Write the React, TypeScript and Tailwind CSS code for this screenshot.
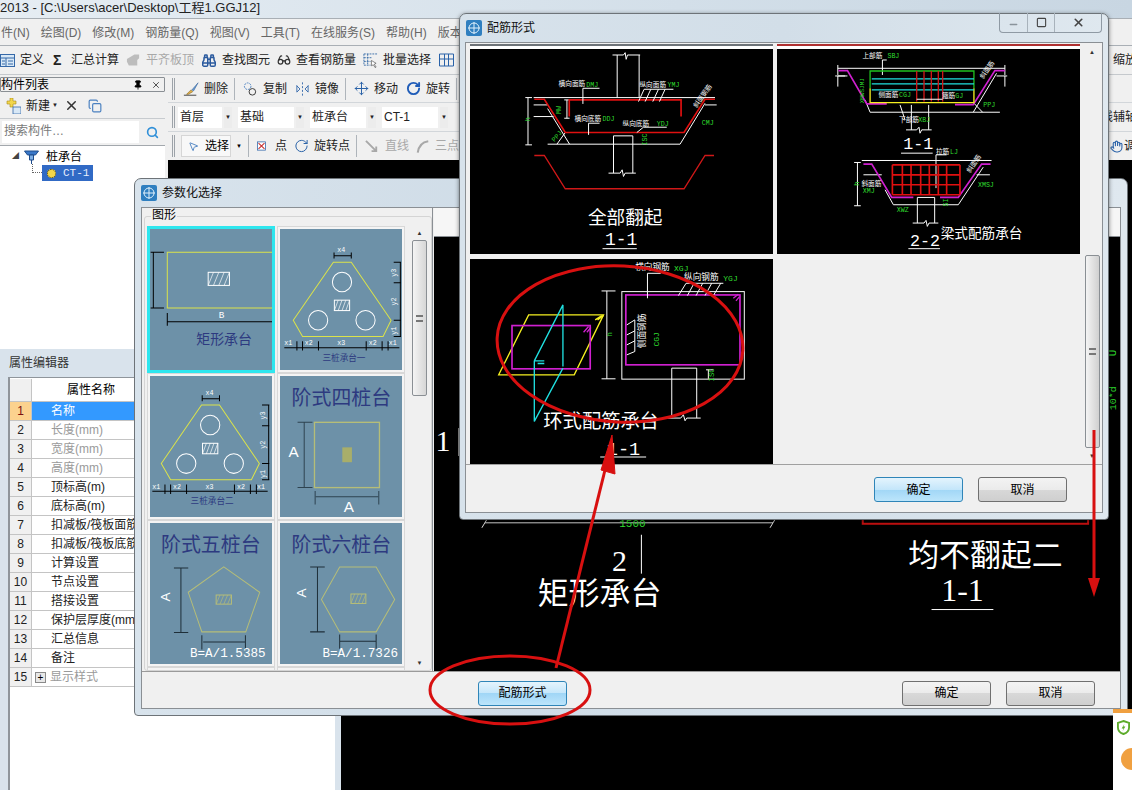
import type { ReactNode } from "react";
import { Binoculars, Copy, FlipHorizontal2, Glasses, Hand, Minus, MousePointer2, Move, Pin, RotateCw, Search, Square, X } from "lucide-react";

const menus = ["件(N)", "绘图(D)", "修改(M)", "钢筋量(Q)", "视图(V)", "工具(T)", "在线服务(S)", "帮助(H)", "版本号"];

const props = [
  { name: "名称", dim: false },
  { name: "长度(mm)", dim: true },
  { name: "宽度(mm)", dim: true },
  { name: "高度(mm)", dim: true },
  { name: "顶标高(m)", dim: false },
  { name: "底标高(m)", dim: false },
  { name: "扣减板/筏板面筋", dim: false },
  { name: "扣减板/筏板底筋", dim: false },
  { name: "计算设置", dim: false },
  { name: "节点设置", dim: false },
  { name: "搭接设置", dim: false },
  { name: "保护层厚度(mm)", dim: false },
  { name: "汇总信息", dim: false },
  { name: "备注", dim: false },
  { name: "显示样式", dim: true },
];

// all drawings below use 3x coordinates, read straight off the zoomed reference
function L({ d, c = "#fff", w = 3 }: { d: string; c?: string; w?: number }) {
  return <path d={d} stroke={c} strokeWidth={w} fill="none" />;
}

function T({ x, y, s, c = "#fff", size = 20, a = "start", r, mono }: { x: number; y: number; s: string; c?: string; size?: number; a?: "start" | "middle" | "end"; r?: number; mono?: boolean }) {
  return (
    <text
      x={x}
      y={y}
      fill={c}
      fontSize={size}
      textAnchor={a}
      transform={r ? `rotate(${r} ${x} ${y})` : undefined}
      fontFamily={mono ? "'Liberation Mono', monospace" : undefined}
    >
      {s}
    </text>
  );
}

function Hatch({ x, y, w, h, c = "#fff" }: { x: number; y: number; w: number; h: number; c?: string }) {
  const step = w / 4;
  return (
    <g>
      <rect x={x} y={y} width={w} height={h} stroke={c} strokeWidth={3} fill="none" />
      {[0, 1, 2, 3].map((i) => (
        <L key={i} d={`M${x + i * step} ${y + h}L${x + (i + 1) * step} ${y}`} c={c} w={2} />
      ))}
    </g>
  );
}

function WinIcon() {
  return (
    <svg viewBox="0 0 16 16" className="w-4 h-4 shrink-0">
      <rect width="16" height="16" rx="2" fill="#2f7fc0" />
      <circle cx="8" cy="8" r="5" stroke="#dff0fb" fill="none" />
      <path d="M8 2v12M2 8h12" stroke="#dff0fb" />
    </svg>
  );
}

function AllRaised() {
  return (
    <svg viewBox="30 117 908 616" className="block w-full h-full">
      <L d="M471 263V135M537 263V135M457 135H490L495 128L498 148L502 135H540" />
      <L d="M220 263H765M203 263V405M195 263H215M195 405H215M220 285H262M220 320H280M770 285H735" />
      <L d="M262 403H660L735 280M262 296L328 403M315 368L290 403" />
      <L d="M320 270V325M312 270H328M312 325H328" />
      <L d="M222 268H252L315 368H672L735 268H765" c="#e01010" w={5} />
      <L d="M327 320V270H663V320" c="#e01010" w={5} />
      <L d="M368 282V235H418M385 375V340H418M535 275L552 238H640M555 275L572 238M578 275L595 238M598 275L615 238M530 368L550 352H620" />
      <L d="M460 378V490M518 378V490M460 378H518M445 490H480L486 480L490 500L495 490H527" />
      <L d="M222 437H252L315 537H672L735 437H762" c="#d01818" w={4} />
      <T x={295} y={228} s="横向面筋" size={20} />
      <T x={378} y={230} s="DMJ" size={20} c="#2fdc2f" mono />
      <T x={538} y={230} s="纵向面筋" size={20} />
      <T x={622} y={231} s="YMJ" size={20} c="#2fdc2f" mono />
      <T x={343} y={332} s="横向底筋" size={20} />
      <T x={427} y={332} s="DDJ" size={20} c="#2fdc2f" mono />
      <T x={487} y={347} s="纵向底筋" size={20} />
      <T x={590} y={349} s="YDJ" size={20} c="#2fdc2f" mono />
      <T x={725} y={345} s="CMJ" size={20} c="#2fdc2f" mono />
      <T x={303} y={312} s="MW" size={20} c="#2fdc2f" r={-90} mono />
      <T x={210} y={335} s="h" size={22} c="#2fdc2f" r={-90} mono />
      <T x={283} y={397} s="PPJ" size={20} c="#2fdc2f" r={-50} mono />
      <T x={562} y={407} s="ISC" size={20} c="#2fdc2f" r={-90} mono />
      <T x={710} y={295} s="斜面钢筋" size={20} r={-55} />
      <T x={495} y={643} s="全部翻起" size={56} a="middle" />
      <T x={483} y={705} s="1-1" size={54} a="middle" mono />
      <L d="M427 717H530" />
    </svg>
  );
}

function BeamType() {
  const grid = [367, 397, 423, 452, 478, 505, 530, 570];
  return (
    <svg viewBox="21 117 909 616" className="block w-full h-full">
      <L d="M203 175H705M203 165V195M705 165V195M203 198V230M203 198H225M705 198V230" />
      <L d="M195 198H232M712 198H680" />
      <L d="M285 270L300 307H690M610 307L680 190M638 307L612 280M390 285L405 330M337 195V150H350" />
      <L d="M205 182H232L290 282H350" c="#d020d0" w={5} />
      <L d="M705 182H675L610 284H555" c="#d020d0" w={5} />
      <L d="M300 235V278H612V235" c="#f5f020" w={4} />
      <L d="M300 235V183H612V235" c="#20c020" w={4} />
      <L d="M305 207H612M305 222H612M305 240H612" c="#20e0e0" w={4} />
      {[440, 462, 484, 505, 518].map((x) => (
        <L key={x} d={`M${x} 183V275`} c="#d01818" w={4} />
      ))}
      <L d="M440 268H518" />
      <L d="M424 285V360M476 285V360M408 360H440L447 352L450 370L455 360H485" />
      <T x={277} y={144} s="上部筋" size={20} />
      <T x={352} y={145} s="SBJ" size={20} c="#2fdc2f" mono />
      <T x={325} y={262} s="侧面筋" size={20} />
      <T x={387} y={262} s="CGJ" size={20} c="#2fdc2f" mono />
      <T x={516} y={264} s="箍筋" size={20} />
      <T x={556} y={265} s="GJ" size={20} c="#2fdc2f" mono />
      <T x={640} y={292} s="PPJ" size={20} c="#2fdc2f" mono />
      <T x={387} y={337} s="下部筋" size={20} />
      <T x={445} y={337} s="XBJ" size={20} c="#2fdc2f" mono />
      <T x={283} y={280} s="XMWSJMJ" size={18} c="#2fdc2f" r={-90} mono />
      <T x={640} y={208} s="斜面筋" size={20} r={-55} />
      <T x={445} y={416} s="1-1" size={50} a="middle" mono />
      <L d="M393 430H488" />

      <L d="M275 452H665M262 458V588M252 458H272M252 588H272M280 495H335M660 495H620" />
      <L d="M345 540L370 585H565L640 472M442 563V640M494 563V640M442 563H494M428 640H462L468 632L472 650L477 640H505M498 535V435H530" />
      <L d="M280 463H305L365 563H430" c="#d020d0" w={5} />
      <L d="M662 463H635L565 563H510" c="#d020d0" w={5} />
      {grid.map((x) => (
        <L key={x} d={`M${x} 465V555`} c="#e01010" w={5} />
      ))}
      {[465, 495, 525, 555].map((y) => (
        <L key={y} d={`M367 ${y}H570`} c="#e01010" w={5} />
      ))}
      <T x={498} y={432} s="拉筋" size={20} />
      <T x={540} y={433} s="LJ" size={20} c="#2fdc2f" mono />
      <T x={274} y={528} s="斜面筋" size={20} />
      <T x={278} y={549} s="XMJ" size={20} c="#2fdc2f" mono />
      <T x={624} y={531} s="XMSJ" size={20} c="#2fdc2f" mono />
      <T x={380} y={606} s="XWZ" size={20} c="#2fdc2f" mono />
      <T x={533} y={590} s="SI" size={20} c="#2fdc2f" r={-90} mono />
      <T x={268} y={528} s="h" size={20} c="#2fdc2f" r={-90} mono />
      <T x={600} y={490} s="斜面筋" size={20} r={-55} />
      <T x={465} y={708} s="2-2" size={50} a="middle" mono />
      <L d="M415 717H510" />
      <T x={512} y={684} s="梁式配筋承台" size={41} />
    </svg>
  );
}

function RingType() {
  return (
    <svg viewBox="30 12 908 616" className="block w-full h-full">
      <path d="M115 360L205 180H430L342 360Z" stroke="#f5f020" strokeWidth={4} fill="none" />
      <rect x={155} y={212} width={235} height={130} stroke="#d020d0" strokeWidth={5} fill="none" />
      <L d="M370 232L385 215M380 232L392 218" c="#d020d0" w={4} />
      <L d="M405 195L425 182M412 195L430 182" c="#f5f020" w={4} />
      <L d="M222 318V500L308 340M222 318L308 150V335M222 318H252M232 326H252" c="#20e0e0" w={4} />
      <L d="M440 108V372M424 108H466M424 372H466" />
      <T x={456} y={245} s="h" size={22} c="#2fdc2f" r={-90} mono />
      <rect x={485} y={110} width={368} height={263} stroke="#fff" strokeWidth={3} fill="none" />
      <rect x={497} y={120} width={343} height={210} stroke="#d020d0" strokeWidth={5} fill="none" />
      <L d="M820 130L835 118M828 138L838 126" c="#d020d0" w={4} />
      <L d="M562 130V55H602M655 122L678 85H790M682 122L702 85M708 122L728 85M735 122L755 85M760 122L782 85" />
      <L d="M500 210L524 195V290L500 300M500 240L524 228M500 270L524 258" />
      <L d="M635 340V490M710 340V490M635 340H710M610 490H662L670 480L675 498L680 490H722" />
      <L d="M745 345V372M738 345H760" />
      <T x={525} y={46} s="横向钢筋" size={26} />
      <T x={642} y={47} s="XGJ" size={24} c="#2fdc2f" mono />
      <T x={672} y={76} s="纵向钢筋" size={26} />
      <T x={790} y={77} s="YGJ" size={24} c="#2fdc2f" mono />
      <T x={555} y={280} s="侧面钢筋" size={26} r={-90} />
      <T x={597} y={275} s="CGJ" size={24} c="#2fdc2f" r={-90} mono />
      <T x={762} y={380} s="ISC" size={22} c="#2fdc2f" r={-90} mono />
      <T x={423} y={521} s="环式配筋承台" size={58} a="middle" />
      <T x={490} y={600} s="1-1" size={56} a="middle" mono />
      <L d="M420 607H558" />
    </svg>
  );
}

function TriPile({ title }: { title: string }) {
  const cy = "#fff";
  const yb = "#dbe34a";
  return (
    <g>
      <path d="M598 259H652L772 432L748 480H505L477 432Z" stroke={yb} strokeWidth={3} fill="none" />
      <circle cx={624} cy={318} r={29} stroke={cy} strokeWidth={3} fill="none" />
      <circle cx={552} cy={432} r={29} stroke={cy} strokeWidth={3} fill="none" />
      <circle cx={695} cy={432} r={29} stroke={cy} strokeWidth={3} fill="none" />
      <Hatch x={601} y={372} w={46} h={31} />
      <L d="M600 240H652M600 230V248M652 230V248" c="#000" />
      <L d="M800 259V480M780 259H802M780 320H802M780 432H802M780 480H802" c="#000" />
      <L d="M450 514H797M488 494V522M505 494V522M553 494V522M697 494V522M745 494V522M763 494V522" c="#000" />
      <T x={610} y={230} s="x4" size={20} mono />
      <T x={450} y={506} s="x1" size={20} mono />
      <T x={512} y={506} s="x2" size={20} mono />
      <T x={610} y={506} s="x3" size={20} mono />
      <T x={705} y={506} s="x2" size={20} mono />
      <T x={765} y={506} s="x1" size={20} mono />
      <T x={788} y={302} s="y3" size={20} r={-90} mono />
      <T x={788} y={388} s="y2" size={20} r={-90} mono />
      <T x={788} y={475} s="y1" size={20} r={-90} mono />
      <T x={630} y={553} s={title} size={26} c="#2d3a80" a="middle" />
    </g>
  );
}

function Thumb({ box, selected, children }: { box: string; selected?: boolean; children: ReactNode }) {
  return (
    <div className={selected ? "h-[147px] p-px border-2 border-[#2ee6ee] bg-[#2ee6ee]" : "h-[147px] p-[2px] border border-[#d8d8d8] bg-[#f4f4f4]"}>
      <svg viewBox={box} preserveAspectRatio="none" className="block w-full h-full bg-[#6d91a8]">
        {children}
      </svg>
    </div>
  );
}

function DialogButton({ label, blue }: { label: string; blue?: boolean }) {
  return (
    <button
      className={`w-[89px] h-[25px] rounded-[3px] border text-[12px] text-black ${
        blue
          ? "border-[#2f85b8] bg-[linear-gradient(#e4f4fd_0%,#c4e6fa_50%,#a0d6f6_50%,#bce5fb_100%)]"
          : "border-[#707070] bg-[linear-gradient(#f3f3f3_0%,#ebebeb_50%,#d8d8d8_50%,#cfcfcf_100%)]"
      }`}
    >
      {label}
    </button>
  );
}

function ToolItem({ icon, label, muted, className }: { icon?: ReactNode; label: string; muted?: boolean; className?: string }) {
  return (
    <div className={`flex items-center gap-[5px] shrink-0 ${muted ? "text-[#a8a8a8]" : "text-[#222]"} ${className ?? ""}`}>
      {icon}
      <span className="text-[12px] leading-none whitespace-nowrap">{label}</span>
    </div>
  );
}

function Combo({ label, narrow }: { label: string; narrow?: boolean }) {
  return (
    <div className={`h-[21px] flex shrink-0 gap-[2px] ${narrow ? "w-[54px]" : "w-[66px]"}`}>
      <div className="flex-1 bg-white flex items-center px-[2px] text-[12px] text-[#222]">{label}</div>
      <div className="w-[8px] bg-[#ececec] flex items-center justify-center text-[6px] text-[#222]">▼</div>
    </div>
  );
}

function Sep() {
  return <div className="w-px h-[22px] bg-[#aeb4ba] shrink-0" />;
}

function Grip() {
  return <div className="w-[3px] h-[22px] border-x border-[#9da3a9] shrink-0" />;
}

export default function App() {
  return (
    <div className="relative w-[1132px] h-[790px] overflow-hidden bg-black flex flex-col [font-family:'Liberation_Sans','Noto_Sans_CJK_SC',sans-serif]">
      {/* main window */}
      <div className="h-[18px] shrink-0 bg-[linear-gradient(90deg,#e6edf3,#d3dfe9_60%,#c8d6e2)] text-[13px] leading-[15px] text-[#222] whitespace-nowrap">
        2013 - [C:\Users\acer\Desktop\工程1.GGJ12]
      </div>
      <div className="h-[28px] shrink-0 bg-[#f0f0f0] border-y border-[#a9afb5] flex items-center gap-[11px] pt-[2px] pl-px text-[12px] text-[#666]">
        {menus.map((m) => (
          <span key={m} className="whitespace-nowrap">
            {m}
          </span>
        ))}
      </div>
      <div className="h-[29px] shrink-0 bg-[#f0f0f0] border-b border-[#c5c9cd] flex items-center gap-[7px] overflow-hidden">
        <ToolItem
          icon={
            <svg viewBox="0 0 15 13" className="w-[15px] h-[13px]">
              <rect x=".5" y=".5" width="14" height="12" fill="#d8e8f6" stroke="#3568a8" />
              <path d="M1 4h13M6 4v8M8 7h5M8 10h5M2 7h3M2 10h3" stroke="#3568a8" />
            </svg>
          }
          label="定义"
          className="w-[46px]"
        />
        <ToolItem icon={<span className="text-[14px] font-bold text-[#222] w-[13px]">Σ</span>} label="汇总计算" className="w-[66px]" />
        <ToolItem
          icon={
            <svg viewBox="0 0 16 14" className="w-[16px] h-[14px]">
              <path d="M1 6L9 1h5v4l-2 2v6H3L1 9z" fill="#bdbdbd" />
            </svg>
          }
          label="平齐板顶"
          muted
          className="w-[68px]"
        />
        <ToolItem icon={<Binoculars className="w-[16px] h-[15px] text-[#2b5a9e]" strokeWidth={2.4} />} label="查找图元" className="w-[69px]" />
        <ToolItem icon={<Glasses className="w-[15px] h-[14px] text-[#333]" />} label="查看钢筋量" className="w-[79px]" />
        <ToolItem
          icon={
            <svg viewBox="0 0 16 16" className="w-[15px] h-[15px]">
              <path d="M1 1h14M1 5h9M1 9h7M1 13h7M1 1v12M5 1v12" stroke="#3b6ea8" fill="none" strokeDasharray="2 1" />
              <path d="M9 8l5 3-2 1 2 3-1 .6-2-3-2 1z" fill="#fff" stroke="#333" strokeWidth=".6" />
            </svg>
          }
          label="批量选择"
          className="w-[68px]"
        />
        <svg viewBox="0 0 16 14" className="w-[17px] h-[14px] shrink-0">
          <path d="M1 1h14v12H1zM6 1v12M10 1v12M1 6h14" stroke="#2a62a8" fill="none" />
        </svg>
        <span className="ml-auto text-[12px] -mr-[5px] text-[#222]">缩放</span>
      </div>

      <div className="flex-1 flex min-h-0">
        {/* component list */}
        <div className="w-[168px] shrink-0 bg-[#f0f0f0] pr-[3px] flex flex-col">
          <div className="h-[15px] mt-[2px] border border-[#8a8f94] rounded-[1px] flex items-center text-[12px] text-black">
            <span className="flex-1 leading-none">构件列表</span>
            <Pin className="w-[10px] h-[10px] mr-[8px] fill-black text-black" />
            <X className="w-[10px] h-[10px] mr-[3px] text-[#333]" />
          </div>
          <div className="h-[26px] mt-px flex items-center border-b border-[#c7cbcf] text-[12px] text-[#222]">
            <svg viewBox="0 0 16 16" className="w-[16px] h-[16px] ml-[5px]">
              <path d="M5 0v3H2v3h3v3h3V6h3V3H8V0z" fill="#f2d64b" stroke="#a98b1a" strokeWidth=".6" />
              <rect x="8" y="9" width="8" height="7" fill="#d8e8f6" stroke="#3568a8" strokeWidth=".8" />
            </svg>
            <span className="ml-[5px]">新建</span>
            <span className="ml-[2px] text-[6px]">▼</span>
            <X className="w-[15px] h-[15px] ml-[6px] text-[#333]" strokeWidth={2.4} />
            <Copy className="w-[14px] h-[14px] ml-[9px] text-[#4a80c0]" />
          </div>
          <div className="h-[26px] flex items-center">
            <div className="w-[137px] h-[22px] ml-[2px] bg-white text-[12px] leading-[21px] text-[#7a7a7a] pl-[2px]">搜索构件…</div>
            <Search className="w-[13px] h-[13px] ml-[7px] text-[#2f8fd8]" strokeWidth={3} />
          </div>
          <div className="flex-1 bg-white border-t border-[#a3a8ad] relative text-[12px]">
            <div className="flex items-center h-[17px] mt-[2px] pl-[12px] gap-[3px]">
              <span className="text-[7px] text-[#444]">◢</span>
              <svg viewBox="0 0 16 16" className="w-[17px] h-[16px] ml-px">
                <path d="M1 2h14l-3 4H4z" fill="#3a78c8" stroke="#1e4c8c" />
                <path d="M6 6h4v5H6zM8 11v4" fill="#7fb0e6" stroke="#1e4c8c" />
              </svg>
              <span className="ml-[3px] text-black">桩承台</span>
            </div>
            <div className="absolute left-[32px] top-[18px] w-[10px] h-[9px] border-l border-b border-dotted border-[#666]" />
            <div className="ml-[42px] w-[51px] h-[16px] bg-[#316ac5] flex items-center gap-[7px] pl-[5px] text-[12px] text-white [font-family:'Liberation_Mono',monospace]">
              <span className="w-[9px] h-[9px] rounded-full bg-[#f2d64b] border border-dotted border-[#5a4a00]" />
              <span className="text-[11px] text-[#e8eefc]">CT-1</span>
            </div>
          </div>
        </div>

        {/* canvas toolbars */}
        <div className="flex-1 min-w-0 flex flex-col">
          <div className="h-[85px] shrink-0 bg-[#f0f0f0] overflow-hidden text-[12px]">
            <div className="h-[28px] flex items-center gap-[6px] pl-[4px] border-b border-[#d2d6da]">
              <Grip />
              <ToolItem
                icon={
                  <svg viewBox="0 0 18 16" className="w-[18px] h-[16px]">
                    <path d="M1 15h14" stroke="#333" />
                    <path d="M4 14l5-5 2 2-5 3z" fill="#e2b04a" stroke="#7a5a10" strokeWidth=".6" />
                    <path d="M10 9l7-8-5 9z" fill="#6a9ad0" stroke="#2a5a98" strokeWidth=".6" />
                  </svg>
                }
                label="删除"
                className="w-[45px] ml-[2px] gap-[2px]"
              />
              <Sep />
              <ToolItem
                icon={
                  <svg viewBox="0 0 16 16" className="w-[16px] h-[16px]">
                    <circle cx="5" cy="5" r="3.5" stroke="#4a80c0" fill="none" strokeDasharray="2 1" />
                    <circle cx="10" cy="11" r="3.5" stroke="#333" fill="none" />
                  </svg>
                }
                label="复制"
                className="w-[44px] ml-[2px]"
              />
              <ToolItem icon={<FlipHorizontal2 className="w-[16px] h-[16px] text-[#2a62a8]" strokeWidth={1.4} />} label="镜像" className="w-[44px] ml-[2px]" />
              <Sep />
              <ToolItem icon={<Move className="w-[15px] h-[15px] text-[#2a62a8]" strokeWidth={1.6} />} label="移动" className="w-[44px] ml-[2px]" />
              <ToolItem icon={<RotateCw className="w-[15px] h-[15px] text-[#1f5cb8]" strokeWidth={3} />} label="旋转" className="w-[44px] ml-[2px]" />
              <Sep />
            </div>
            <div className="h-[29px] flex items-center gap-[6px] pl-[4px] border-b border-[#d2d6da]">
              <Grip />
              <div className="-ml-[3px] flex gap-[6px]">
                <Combo label="首层" narrow />
                <Combo label="基础" />
                <Combo label="桩承台" />
                <Combo label="CT-1" />
              </div>
              <span className="ml-auto -mr-[5px] text-[#222]">线辅轴</span>
            </div>
            <div className="h-[28px] flex items-center gap-[6px] pl-[4px]">
              <Grip />
              <div className="flex items-center gap-[6px] w-[50px] h-[22px] pl-[6px] bg-[#f8f8f8] border border-[#d6d6d6]">
                <MousePointer2 className="w-[11px] h-[11px] text-[#4a80c0]" />
                <span>选择</span>
              </div>
              <span className="text-[6px] -ml-px">▼</span>
              <Sep />
              <ToolItem
                icon={
                  <svg viewBox="0 0 12 12" className="w-[12px] h-[12px]">
                    <rect x=".5" y=".5" width="11" height="11" fill="#fff" stroke="#2a62a8" />
                    <path d="M2 2l8 8M10 2l-8 8" stroke="#c83030" strokeWidth="1.4" />
                  </svg>
                }
                label="点"
                className="w-[30px] ml-[2px] gap-[9px]"
              />
              <ToolItem icon={<RotateCw className="w-[16px] h-[16px] text-[#2a62a8]" strokeWidth={1.6} />} label="旋转点" className="w-[56px] ml-px gap-[2px]" />
              <Sep />
              <ToolItem
                icon={
                  <svg viewBox="0 0 16 16" className="w-[15px] h-[15px]">
                    <path d="M1 2l11 11M12 8v5H7" stroke="#a8a8a8" strokeWidth="2" fill="none" />
                  </svg>
                }
                label="直线"
                muted
                className="w-[44px] ml-[2px]"
              />
              <ToolItem
                icon={
                  <svg viewBox="0 0 16 16" className="w-[14px] h-[15px]">
                    <path d="M2 15C3 8 7 3 14 2" stroke="#a8a8a8" strokeWidth="2.4" fill="none" />
                  </svg>
                }
                label="三点画弧"
                muted
                className="ml-px"
              />
              <span className="ml-auto text-[#222] flex items-center gap-px -mr-[4px]">
                <Hand className="w-[13px] h-[13px] text-[#2a62a8]" />调
              </span>
            </div>
          </div>
          <div className="flex-1 bg-black" />
        </div>
      </div>

      {/* property editor */}
      <div className="absolute left-0 top-[349px] w-[341px] h-[441px] bg-[#d9e3ec] flex flex-col">
        <div className="h-[28px] flex items-center pl-[9px] text-[12px] text-[#333]">属性编辑器</div>
        <div className="flex-1 ml-[8px] mr-[6px] border-l-2 border-t border-[#8f959b] bg-white flex flex-col">
          <div className="h-[23px] mt-px flex border-b border-[#c4c4c4] text-[12px] text-black">
            <div className="w-[22px] bg-[#f0f0f0] border-r border-[#c4c4c4]" />
            <div className="w-[118px] text-center leading-[23px]">属性名称</div>
          </div>
          {props.map((p, i) => (
            <div key={p.name} className="h-[19px] flex border-b border-[#c4c4c4] text-[12px] leading-[18px] whitespace-nowrap overflow-hidden">
              <div className={`w-[22px] shrink-0 text-center border-r border-[#c4c4c4] ${i === 0 ? "bg-[#fcd28e] text-[#7a1010]" : "bg-[#f0f0f0] text-[#222]"}`}>{i + 1}</div>
              <div className={`flex-1 flex items-center ${i === 0 ? "bg-[#3399ff] text-white" : p.dim ? "text-[#9a9a9a]" : "text-[#222]"}`}>
                {i === 14 ? (
                  <span className="w-[11px] h-[11px] mx-[3px] border border-[#8a8a8a] bg-[#e8e8e8] text-[10px] leading-[9px] text-center text-black">+</span>
                ) : (
                  <span className="w-[19px]" />
                )}
                {i === 14 ? <span className="ml-[1px]">{p.name}</span> : p.name}
              </div>
            </div>
          ))}
        </div>
      </div>

      {/* parametric dialog */}
      <div className="absolute left-[134px] top-[178px] w-[994px] h-[538px] rounded-t-[7px] rounded-b-[4px] bg-[linear-gradient(90deg,#d8e3ec,#cfdce7_40%,#dfe8ef)] border border-[#6d7378] flex flex-col px-[6px] pb-[6px]">
        <div className="h-[28px] shrink-0 flex items-center gap-[5px] text-[12px] text-[#111]">
          <WinIcon />
          参数化选择
        </div>
        <div className="flex-1 min-h-0 bg-[#f0f0f0] border border-[#8a8f94] flex flex-col">
          <div className="flex-1 min-h-0 flex">
            <div className="w-[290px] shrink-0 relative pl-[2px] pt-[8px] overflow-hidden">
              <div className="h-full border border-[#d4d4d4] rounded-[3px] flex pl-[2px] pt-[9px] pr-px">
                <div className="w-[258px] grid grid-cols-2 gap-x-[2px] gap-y-0 content-start overflow-hidden">
                  <Thumb box="45 160 367 420" selected>
                    <L d="M412 229H97V395H412" c="#dbe34a" />
                    <L d="M55 229V395M47 229H87M47 395H87" c="#000" />
                    <Hatch x={220} y={289} w={64} h={39} />
                    <L d="M97 436H412M97 410V448" c="#000" />
                    <T x={252} y={426} s="B" size={28} mono />
                    <T x={268} y={503} s="矩形承台" size={42} c="#2d3a80" a="middle" />
                  </Thumb>
                  <Thumb box="437 160 368 420">
                    <TriPile title="三桩承台一" />
                  </Thumb>
                  <Thumb box="45 605 367 417">
                    <g transform="translate(-398 432)">
                      <TriPile title="三桩承台二" />
                    </g>
                  </Thumb>
                  <Thumb box="437 605 368 417">
                    <T x={622} y={692} s="阶式四桩台" size={60} c="#2d3a80" a="middle" />
                    <rect x={541} y={742} width={196} height={193} stroke="#b5bd78" strokeWidth={4} fill="none" />
                    <rect x={625} y={816} width={29} height={44} fill="#a8ae6a" />
                    <L d="M510 742V935M490 742H535M490 935H535M545 962H733M543 945V985M735 945V985" c="#2e4350" />
                    <T x={478} y={845} s="A" size={46} a="middle" />
                    <T x={645} y={1008} s="A" size={46} a="middle" />
                  </Thumb>
                  <Thumb box="45 30 367 417">
                    <T x={228} y={117} s="阶式五桩台" size={60} c="#2d3a80" a="middle" />
                    <path d="M267 160L375 235L333 352H201L160 235Z" stroke="#b5bd78" strokeWidth={3} fill="none" />
                    <Hatch x={244} y={243} w={46} h={27} c="#b5bd78" />
                    <L d="M138 163V354M117 163H160M117 354H160M205 382H332M201 362V404M332 362V404" c="#1e2e38" />
                    <T x={105} y={262} s="A" size={40} r={-90} />
                    <T x={165} y={427} s="B=A/1.5385" size={38} mono />
                  </Thumb>
                  <Thumb box="437 30 368 417">
                    <T x={622} y={117} s="阶式六桩台" size={60} c="#2d3a80" a="middle" />
                    <path d="M617 160H727L783 256L727 352H617L562 256Z" stroke="#b5bd78" strokeWidth={3} fill="none" />
                    <Hatch x={651} y={240} w={45} h={28} c="#b5bd78" />
                    <L d="M550 160V352M528 160H572M528 352H572M617 380H727M617 360V402M727 360V402" c="#1e2e38" />
                    <T x={514} y={250} s="A" size={40} r={-90} />
                    <T x={565} y={427} s="B=A/1.7326" size={38} mono />
                  </Thumb>
                  <div className="h-[10px] border border-[#d8d8d8] bg-[#f4f4f4]" />
                  <div className="h-[10px] border border-[#d8d8d8] bg-[#f4f4f4]" />
                </div>
                <div className="w-[17px] ml-[6px] flex flex-col items-center text-[6px] text-[#333]">
                  <div className="h-[14px] leading-[14px]">▲</div>
                  <div className="w-[15px] h-[156px] border border-[#8a8f94] rounded-[2px] bg-[linear-gradient(90deg,#f4f4f4,#d6d6d6)] flex items-center justify-center">
                    <div className="w-[7px] h-[7px] border-y-2 border-[#777]" />
                  </div>
                  <div className="flex-1" />
                  <div className="h-[14px] leading-[14px]">▼</div>
                </div>
              </div>
              <span className="absolute left-[9px] top-0 bg-[#f0f0f0] px-px text-[12px] leading-[15px] text-black">图形</span>
            </div>
            <div className="flex-1 min-w-0 flex flex-col border-l border-[#8a8f94] pl-px">
              <div className="h-[29px] shrink-0 bg-[#f6f6f6] border-b border-[#8a8f94]" />
              <svg viewBox="432 237 688 434" className="block w-full flex-1 min-h-0 bg-black">
                <text x={441} y={451} fill="#fff" fontSize={30} textAnchor="middle" fontFamily="'Liberation Serif', serif">1</text>
                <path d="M457 428V456" stroke="#fff" />
                <path d="M483 523H772M480 528L486 518M769 528L775 518" stroke="#ddd" />
                <text x={631} y={527} fill="#2fdc2f" fontSize={11} textAnchor="middle" fontFamily="'Liberation Mono', monospace">1500</text>
                <text x={618} y={571} fill="#fff" fontSize={30} textAnchor="middle" fontFamily="'Liberation Serif', serif">2</text>
                <path d="M640 535V574" stroke="#fff" />
                <text x={598} y={604} fill="#fff" fontSize={31} textAnchor="middle">矩形承台</text>
                <path d="M862 520V524H1088V520" stroke="#c81010" strokeWidth={2} fill="none" />
                <text x={985} y={566} fill="#fff" fontSize={31} textAnchor="middle">均不翻起二</text>
                <text x={962} y={601} fill="#fff" fontSize={32} textAnchor="middle" fontFamily="'Liberation Serif', serif">1-1</text>
                <path d="M931 610H993" stroke="#fff" />
                <text x={1116} y={356} fill="#2fdc2f" fontSize={11} transform="rotate(-90 1116 356)" fontFamily="'Liberation Mono', monospace">U</text>
                <text x={1116} y={410} fill="#2fdc2f" fontSize={10} transform="rotate(-90 1116 410)" fontFamily="'Liberation Mono', monospace">10*d</text>
              </svg>
            </div>
          </div>
          <div className="h-[37px] shrink-0 border-t border-[#9a9a9a] flex items-center gap-[15px] pl-[336px] pr-[25px] pt-[6px]">
            <DialogButton label="配筋形式" blue />
            <div className="flex-1" />
            <DialogButton label="确定" />
            <DialogButton label="取消" />
          </div>
        </div>
      </div>

      {/* rebar form dialog */}
      <div className="absolute left-[459px] top-[13px] w-[650px] h-[507px] rounded-t-[7px] rounded-b-[4px] bg-[linear-gradient(90deg,#d7e2eb,#d2dee8_50%,#dfe8ef)] border border-[#6d7378] flex flex-col px-[5px] pb-[6px] shadow-[0_1px_4px_rgba(0,0,0,0.5)]">
        <div className="h-[28px] shrink-0 flex items-center gap-[5px] pl-px text-[12px] text-[#111] relative">
          <WinIcon />
          配筋形式
          <div className="absolute right-px -top-px w-[103px] h-[20px] border border-t-0 border-[#8f9aa4] rounded-b-[4px] flex text-[#444]">
            <div className="w-[28px] border-r border-[#a8b2bb] flex items-center justify-center">
              <Minus className="w-[11px] h-[11px] mt-[3px] text-[#8a949c]" strokeWidth={3} />
            </div>
            <div className="w-[27px] border-r border-[#a8b2bb] flex items-center justify-center">
              <Square className="w-[11px] h-[11px]" strokeWidth={2.4} />
            </div>
            <div className="flex-1 flex items-center justify-center">
              <X className="w-[13px] h-[13px]" strokeWidth={3} />
            </div>
          </div>
        </div>
        <div className="flex-1 min-h-0 bg-[#f0f0f0] border border-[#8a8f94] flex flex-col">
          <div className="flex-1 min-h-0 flex">
            <div className="flex-1 min-w-0 pl-[4px]">
              <div className="grid grid-cols-[303px_303px] gap-x-[4px] h-[6px]">
                <div className="border-t-2 border-[#6d7378] mt-px bg-white" />
                <div className="border-t-2 border-[#b03030] mt-px bg-white" />
              </div>
              <div className="grid grid-cols-[303px_303px] grid-rows-[205px_205px] gap-x-[4px] gap-y-[5px]">
                <div className="bg-black">
                  <AllRaised />
                </div>
                <div className="bg-black">
                  <BeamType />
                </div>
                <div className="bg-black">
                  <RingType />
                </div>
              </div>
            </div>
            <div className="w-[16px] shrink-0 mr-[2px] flex flex-col items-center text-[6px] text-[#333]">
              <div className="h-[14px] mt-[2px] leading-[14px]">▲</div>
              <div className="flex-1" />
              <div className="w-[15px] h-[193px] border border-[#8a8f94] rounded-[2px] bg-[linear-gradient(90deg,#f4f4f4,#d0d0d0)] flex items-center justify-center">
                <div className="w-[7px] h-[7px] border-y-2 border-[#777]" />
              </div>
              <div className="h-[16px] leading-[16px]">▼</div>
            </div>
          </div>
          <div className="h-[48px] shrink-0 border-t border-[#a0a0a0] flex items-center justify-end gap-[15px] pr-[35px] pt-[2px]">
            <DialogButton label="确定" blue />
            <DialogButton label="取消" />
          </div>
        </div>
      </div>

      {/* tray popup peeking in */}
      <div className="absolute left-[1113px] top-[709px] w-[19px] h-[81px] bg-white border-t-4 border-[#f0a040]">
        <svg viewBox="0 0 14 16" className="w-[13px] h-[15px] ml-[4px] mt-[7px]">
          <path d="M7 1l6 2v5c0 4-3 6-6 7-3-1-6-3-6-7V3z" fill="none" stroke="#5cab2a" strokeWidth="2" />
          <path d="M8 4L5 9h2l-1 3 3-5H7z" fill="#5cab2a" />
        </svg>
        <div className="w-[14px] h-[22px] rounded-l-full bg-[#f0a040] ml-[8px] mt-[13px]" />
      </div>

      {/* red markup on top of the screenshot */}
      <svg viewBox="0 0 1132 790" className="absolute inset-0 w-full h-full pointer-events-none">
        <ellipse cx={620} cy={344} rx={123} ry={78} fill="none" stroke="#d81010" strokeWidth={3} transform="rotate(3 620 344)" />
        <ellipse cx={510} cy={690} rx={80} ry={34} fill="none" stroke="#d81010" strokeWidth={3} />
        <path d="M556 668L605 470" stroke="#d81010" strokeWidth={3} />
        <path d="M612 435L615 474L601 470Z" fill="#d81010" stroke="#d81010" />
        <path d="M1094 430V580" stroke="#d81010" strokeWidth={3} />
        <path d="M1088 578H1100L1094 597Z" fill="#d81010" />
      </svg>
    </div>
  );
}
